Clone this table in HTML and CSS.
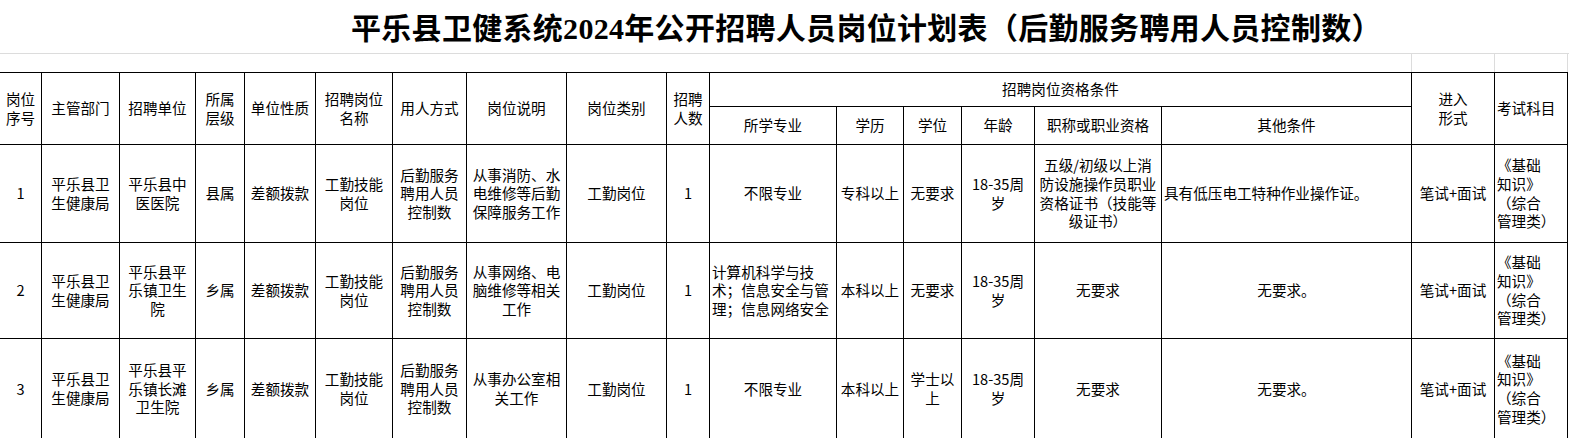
FILE: index.html
```html
<!DOCTYPE html>
<html lang="zh-CN">
<head>
<meta charset="utf-8">
<title>平乐县卫健系统2024年公开招聘人员岗位计划表</title>
<link rel="stylesheet" href="styles.css">
</head>
<body>
<div class="sheet">
  <div class="title-row">
    <h1 class="title">平乐县卫健系统2024年公开招聘人员岗位计划表（后勤服务聘用人员控制数）</h1>
  </div>
  <div class="blank-row">
    <div class="blank blank-main"></div>
    <div class="blank blank-q"></div>
    <div class="blank blank-r"></div>
  </div>
  <div class="grid">
    <div class="cell hd span-r">岗位<br>序号</div>
    <div class="cell hd span-r">主管部门</div>
    <div class="cell hd span-r">招聘单位</div>
    <div class="cell hd span-r">所属<br>层级</div>
    <div class="cell hd span-r">单位性质</div>
    <div class="cell hd span-r">招聘岗位<br>名称</div>
    <div class="cell hd span-r">用人方式</div>
    <div class="cell hd span-r">岗位说明</div>
    <div class="cell hd span-r">岗位类别</div>
    <div class="cell hd span-r">招聘<br>人数</div>
    <div class="cell hd span-qual">招聘岗位资格条件</div>
    <div class="cell hd span-r">进入<br>形式</div>
    <div class="cell hd span-r left">考试科目</div>
    <div class="cell hd">所学专业</div>
    <div class="cell hd">学历</div>
    <div class="cell hd">学位</div>
    <div class="cell hd">年龄</div>
    <div class="cell hd">职称或职业资格</div>
    <div class="cell hd">其他条件</div>

    <div class="cell">1</div>
    <div class="cell">平乐县卫<br>生健康局</div>
    <div class="cell">平乐县中<br>医医院</div>
    <div class="cell">县属</div>
    <div class="cell">差额拨款</div>
    <div class="cell">工勤技能<br>岗位</div>
    <div class="cell">后勤服务<br>聘用人员<br>控制数</div>
    <div class="cell">从事消防、水<br>电维修等后勤<br>保障服务工作</div>
    <div class="cell">工勤岗位</div>
    <div class="cell">1</div>
    <div class="cell">不限专业</div>
    <div class="cell">专科以上</div>
    <div class="cell">无要求</div>
    <div class="cell">18-35周<br>岁</div>
    <div class="cell">五级/初级以上消<br>防设施操作员职业<br>资格证书（技能等<br>级证书）</div>
    <div class="cell left">具有低压电工特种作业操作证。</div>
    <div class="cell">笔试+面试</div>
    <div class="cell left">《基础<br>知识》<br>（综合<br>管理类）</div>

    <div class="cell">2</div>
    <div class="cell">平乐县卫<br>生健康局</div>
    <div class="cell">平乐县平<br>乐镇卫生<br>院</div>
    <div class="cell">乡属</div>
    <div class="cell">差额拨款</div>
    <div class="cell">工勤技能<br>岗位</div>
    <div class="cell">后勤服务<br>聘用人员<br>控制数</div>
    <div class="cell">从事网络、电<br>脑维修等相关<br>工作</div>
    <div class="cell">工勤岗位</div>
    <div class="cell">1</div>
    <div class="cell left">计算机科学与技<br>术；信息安全与管<br>理；信息网络安全</div>
    <div class="cell">本科以上</div>
    <div class="cell">无要求</div>
    <div class="cell">18-35周<br>岁</div>
    <div class="cell">无要求</div>
    <div class="cell">无要求。</div>
    <div class="cell">笔试+面试</div>
    <div class="cell left">《基础<br>知识》<br>（综合<br>管理类）</div>

    <div class="cell">3</div>
    <div class="cell">平乐县卫<br>生健康局</div>
    <div class="cell">平乐县平<br>乐镇长滩<br>卫生院</div>
    <div class="cell">乡属</div>
    <div class="cell">差额拨款</div>
    <div class="cell">工勤技能<br>岗位</div>
    <div class="cell">后勤服务<br>聘用人员<br>控制数</div>
    <div class="cell">从事办公室相<br>关工作</div>
    <div class="cell">工勤岗位</div>
    <div class="cell">1</div>
    <div class="cell">不限专业</div>
    <div class="cell">本科以上</div>
    <div class="cell">学士以<br>上</div>
    <div class="cell">18-35周<br>岁</div>
    <div class="cell">无要求</div>
    <div class="cell">无要求。</div>
    <div class="cell">笔试+面试</div>
    <div class="cell left">《基础<br>知识》<br>（综合<br>管理类）</div>
  </div>
</div>
</body>
</html>
```
FILE: styles.css
```css
html, body {
  margin: 0;
  padding: 0;
  background: #fff;
}

body {
  font-family: "Noto Sans CJK SC", "Noto Sans", sans-serif;
  color: #000;
  overflow: hidden;
}

.sheet {
  width: 1569px;
}

.title-row {
  height: 53px;
  border-bottom: 1px solid #dcdcdc;
  display: flex;
  align-items: center;
  padding-left: 351px;
  box-sizing: content-box;
}

.title {
  margin: 0;
  padding-top: 4px;
  font-family: "Liberation Serif", "Noto Sans CJK SC", serif;
  font-size: 30px;
  font-weight: 700;
  line-height: 34px;
  letter-spacing: 0.3px;
  white-space: nowrap;
  color: #000;
}

.blank-row {
  display: flex;
  height: 18px;
}

.blank {
  border-right: 1px solid #dcdcdc;
}

.blank-main { width: 1411px; }
.blank-q { width: 82px; }
.blank-r { width: 72px; }

.grid {
  display: grid;
  grid-template-columns: 41px 77px 75px 48px 70px 76px 73px 99px 99px 42px 126px 66px 57px 72px 126px 249px 82px 72px;
  grid-template-rows: 33px 37px 97px 95px 100px;
  gap: 1px;
  padding: 1px 1px 0 0;
  background: #000;
  width: max-content;
}

.cell {
  background: #fff;
  display: flex;
  align-items: center;
  justify-content: center;
  text-align: center;
  font-size: 14.6px;
  line-height: 18.6px;
  padding: 0 1px;
  overflow: hidden;
  white-space: nowrap;
}

.cell.left {
  justify-content: flex-start;
  text-align: left;
  padding-left: 2px;
}

.span-r {
  grid-row: span 2;
}

.span-qual {
  grid-column: span 6;
}
```
